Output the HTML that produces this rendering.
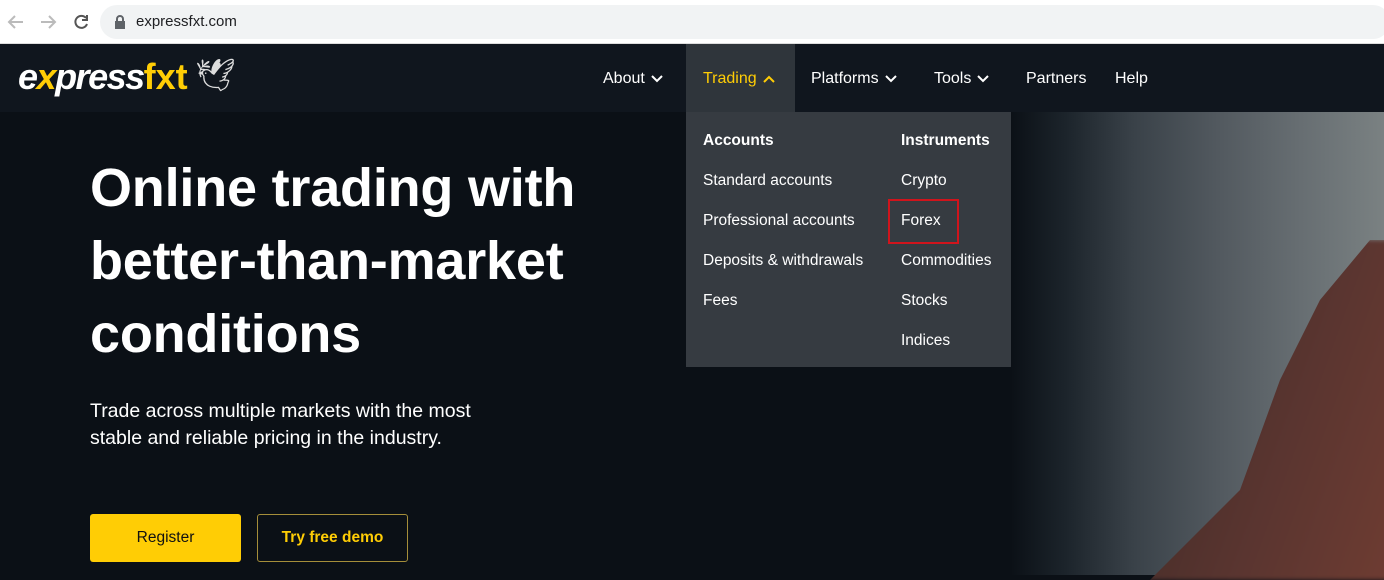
<!DOCTYPE html>
<html><head><style>
*{margin:0;padding:0;box-sizing:border-box}
body{width:1384px;height:575px;overflow:hidden;font-family:"Liberation Sans",sans-serif;background:#0b1016;position:relative}
.bar{position:absolute;left:0;top:0;width:1384px;height:44px;background:#fff;border-bottom:1px solid #ddd}
.url{position:absolute;left:100px;top:5px;width:1290px;height:34px;background:#f1f3f4;border-radius:17px}
.url span{position:absolute;left:36px;top:8px;font-size:15px;color:#202124}
.nav{position:absolute;top:44px;left:0;width:1384px;height:68px;background:#10161e}
.hero{position:absolute;top:112px;left:0;width:1384px;height:463px;background:linear-gradient(90deg,#0b1016 0%,#0b1016 73%,#1c242b 77%,#3a4249 82%,#52595f 88%,#676e72 94%,#7a8182 100%)}
.finger{position:absolute;left:1130px;top:240px;width:260px;height:340px;background:linear-gradient(110deg,#3a2824,#5a3530 60%,#6e3c32);clip-path:polygon(240px 0,254px 0,254px 340px,20px 340px,110px 250px,150px 140px,190px 60px);filter:blur(2px)}
.ni{position:absolute;top:70px;color:#fff;font-size:16px}
.ni svg{vertical-align:middle;margin-left:6px}
.drop{position:absolute;left:686px;top:112px;width:325px;height:255px;background:#363b41}
.tab{position:absolute;left:686px;top:44px;width:109px;height:68px;background:#2f353b}
.d{position:absolute;color:#fff;font-size:15.5px}
h1{position:absolute;left:90px;top:152px;color:#fff;font-size:54px;font-weight:bold;line-height:73px;letter-spacing:-0.2px}
.p{position:absolute;left:90px;top:398px;color:#fff;font-size:19.5px;line-height:27px}
.b1{position:absolute;left:90px;top:514px;width:151px;height:48px;background:#ffcd05;border-radius:3px;color:#111;font-size:15.5px;text-align:center;line-height:48px}
.b2{position:absolute;left:257px;top:514px;width:151px;height:48px;border:1px solid #a58e3a;border-radius:3px;color:#ffcd05;font-size:15.5px;font-weight:bold;text-align:center;line-height:46px}
</style></head><body>
<div class="bar">
<svg width="90" height="44" style="position:absolute;left:0;top:0"><g fill="none" stroke-width="2"><path d="M23 22H9M15 16l-6 6 6 6" stroke="#bbb"/><path d="M41 22h14M49 16l6 6-6 6" stroke="#bbb"/><path d="M86 18a6 6 0 1 0 1 6" stroke="#555"/><path d="M87 15v5h-5" stroke="#555"/></g></svg>
<div class="url"><svg width="12" height="14" style="position:absolute;left:14px;top:10px"><rect x="1" y="6" width="10" height="8" fill="#5f6368"/><path d="M3 7V4a3 3 0 0 1 6 0v3" stroke="#5f6368" stroke-width="2" fill="none"/></svg><span>expressfxt.com</span></div>
</div>
<div class="nav"></div>
<div class="hero"></div>
<div class="finger"></div>
<div style="position:absolute;left:18px;top:56px;font-size:36px;font-weight:bold;font-style:italic;letter-spacing:-1.5px;color:#fff">e<span style="color:#ffcd05">x</span>press<span style="color:#ffcd05;font-style:normal;letter-spacing:0">fxt</span></div>
<div style="position:absolute;left:195px;top:56px;font-size:32px;color:#ddd">🕊</div>
<div class="tab"></div>
<div class="ni" style="left:603px">About<svg width="12" height="8"><path d="M1 1l5 5 5-5" stroke="#fff" stroke-width="2" fill="none"/></svg></div>
<div class="ni" style="left:703px;color:#ffcd05">Trading<svg width="12" height="8"><path d="M1 7l5-5 5 5" stroke="#ffcd05" stroke-width="2" fill="none"/></svg></div>
<div class="ni" style="left:811px">Platforms<svg width="12" height="8"><path d="M1 1l5 5 5-5" stroke="#fff" stroke-width="2" fill="none"/></svg></div>
<div class="ni" style="left:934px">Tools<svg width="12" height="8"><path d="M1 1l5 5 5-5" stroke="#fff" stroke-width="2" fill="none"/></svg></div>
<div class="ni" style="left:1026px">Partners</div>
<div class="ni" style="left:1115px">Help</div>
<div class="drop"></div>
<div class="d" style="left:703px;top:132px;font-weight:bold">Accounts</div>
<div class="d" style="left:703px;top:172px">Standard accounts</div>
<div class="d" style="left:703px;top:212px">Professional accounts</div>
<div class="d" style="left:703px;top:252px">Deposits &amp; withdrawals</div>
<div class="d" style="left:703px;top:292px">Fees</div>
<div class="d" style="left:901px;top:132px;font-weight:bold">Instruments</div>
<div class="d" style="left:901px;top:172px">Crypto</div>
<div class="d" style="left:901px;top:212px">Forex</div>
<div style="position:absolute;left:888px;top:199px;width:71px;height:45px;border:2px solid #d0141c"></div>
<div class="d" style="left:901px;top:252px">Commodities</div>
<div class="d" style="left:901px;top:292px">Stocks</div>
<div class="d" style="left:901px;top:332px">Indices</div>
<h1>Online trading with<br>better-than-market<br>conditions</h1>
<div class="p">Trade across multiple markets with the most<br>stable and reliable pricing in the industry.</div>
<div class="b1">Register</div>
<div class="b2">Try free demo</div>
</body></html>
